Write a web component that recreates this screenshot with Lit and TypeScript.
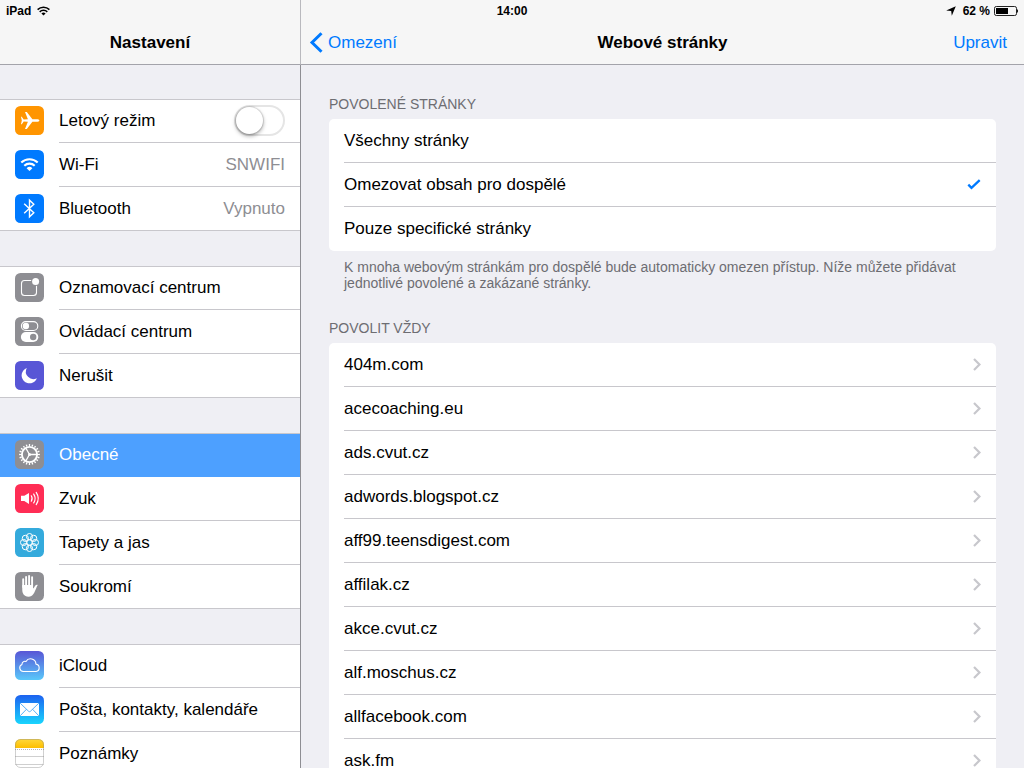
import { LitElement, html, css, svg, nothing } from "lit";
import type { TemplateResult, SVGTemplateResult } from "lit";
import { customElement, property, state } from "lit/decorators.js";
import { classMap } from "lit/directives/class-map.js";

type IconName =
  | "airplane" | "wifi" | "bluetooth" | "notifications" | "control" | "moon"
  | "gear" | "sound" | "wallpaper" | "privacy" | "icloud" | "mail" | "notes";

interface MenuItem {
  icon: IconName;
  label: string;
  value?: string;
  toggle?: boolean;
  selected?: boolean;
}

const MENU: MenuItem[][] = [
  [
    { icon: "airplane", label: "Letový režim", toggle: true },
    { icon: "wifi", label: "Wi-Fi", value: "SNWIFI" },
    { icon: "bluetooth", label: "Bluetooth", value: "Vypnuto" },
  ],
  [
    { icon: "notifications", label: "Oznamovací centrum" },
    { icon: "control", label: "Ovládací centrum" },
    { icon: "moon", label: "Nerušit" },
  ],
  [
    { icon: "gear", label: "Obecné", selected: true },
    { icon: "sound", label: "Zvuk" },
    { icon: "wallpaper", label: "Tapety a jas" },
    { icon: "privacy", label: "Soukromí" },
  ],
  [
    { icon: "icloud", label: "iCloud" },
    { icon: "mail", label: "Pošta, kontakty, kalendáře" },
    { icon: "notes", label: "Poznámky" },
  ],
];

const MODES = ["Všechny stránky", "Omezovat obsah pro dospělé", "Pouze specifické stránky"];

const SITES = [
  "404m.com", "acecoaching.eu", "ads.cvut.cz", "adwords.blogspot.cz",
  "aff99.teensdigest.com", "affilak.cz", "akce.cvut.cz", "alf.moschus.cz",
  "allfacebook.com", "ask.fm",
];

const ring = (count: number, radius: number) =>
  Array.from({ length: count }, (_, i) => {
    const a = (i * 2 * Math.PI) / count;
    return [14.5 + radius * Math.cos(a), 14.5 + radius * Math.sin(a)];
  });

const GLYPHS: Record<IconName, SVGTemplateResult> = {
  airplane: svg`
    <rect width="29" height="29" rx="5.500" fill="#ff9500"/>
    <path fill="#fff" d="M24.400 14.500c0-.8-1.300-1.300-2.800-1.300h-4.200L11.800 6H10l2.900 7.200-4.200.2-1.900-2.700H6l.8 3.800L6 18.300h.8l1.900-2.700 4.200.2L10 23h1.800l5.600-7.200h4.200c1.500 0 2.800-.5 2.800-1.300z"/>`,
  wifi: svg`
    <rect width="29" height="29" rx="5.500" fill="#007aff"/>
    <g fill="none" stroke="#fff" stroke-width="2.100">
      <path d="M6.300 12.600a11.800 11.800 0 0 1 16.400 0"/>
      <path d="M9.300 15.700a7.500 7.500 0 0 1 10.400 0"/>
    </g>
    <path fill="#fff" d="M14.500 21.100l-2.900-2.900a4.100 4.100 0 0 1 5.800 0z"/>`,
  bluetooth: svg`
    <rect width="29" height="29" rx="5.500" fill="#007aff"/>
    <path fill="none" stroke="#fff" stroke-width="1.400" d="M9.200 9.800l9.600 9-4.300 4V6.200l4.300 4-9.600 9"/>`,
  notifications: svg`
    <rect width="29" height="29" rx="5.500" fill="#8e8e93"/>
    <rect x="6.500" y="7.500" width="15" height="15" rx="3" fill="none" stroke="#fff" stroke-width="1.100"/>
    <circle cx="20.600" cy="8.500" r="4.600" fill="#8e8e93"/>
    <circle cx="20.600" cy="8.500" r="3.500" fill="#fff"/>`,
  control: svg`
    <rect width="29" height="29" rx="5.500" fill="#8e8e93"/>
    <rect x="6.400" y="4.600" width="16.400" height="8.900" rx="4.450" fill="none" stroke="#fff" stroke-width="1.100"/>
    <circle cx="10.900" cy="9.050" r="3.200" fill="#fff"/>
    <rect x="5.900" y="15.100" width="17.400" height="9.900" rx="4.950" fill="#fff"/>
    <circle cx="18.200" cy="20.050" r="3.200" fill="#8e8e93"/>`,
  moon: svg`
    <rect width="29" height="29" rx="5.500" fill="#5856d6"/>
    <path fill="#fff" d="M11.800 7A7.900 7.900 0 1 0 21.900 17.200 7.500 7.500 0 0 1 11.800 7z"/>`,
  gear: svg`
    <rect width="29" height="29" rx="5.500" fill="#8e8e93"/>
    <g fill="none" stroke="#fff">
      <circle cx="14.500" cy="14.500" r="9.400" stroke-width="2" pathLength="80" stroke-dasharray="1.800 2.200" stroke-dashoffset=".9"/>
      <circle cx="14.500" cy="14.500" r="7.600" stroke-width="1.900"/>
      <path stroke-width="1.300" d="M14.500 14.500h7.500M14.500 14.500l-3.750-6.500M14.500 14.500l-3.750 6.500"/>
    </g>
    <circle cx="14.500" cy="14.500" r="1.500" fill="#fff"/>`,
  sound: svg`
    <rect width="29" height="29" rx="5.500" fill="#ff2d55"/>
    <path fill="#fff" d="M6 11.800h3.300L14 9v11l-4.700-3H6z"/>
    <g fill="none" stroke="#fff" stroke-width="1.200" stroke-linecap="round">
      <path d="M16.300 11.800q1.700 2.700 0 5.400"/>
      <path d="M18.700 10.100q2.900 4.400 0 8.800"/>
      <path d="M21.200 8.400q4.100 6.100 0 12.200"/>
    </g>`,
  wallpaper: svg`
    <rect width="29" height="29" rx="5.500" fill="#34aadc"/>
    <g fill="none" stroke="#fff" stroke-width="1">
      <circle cx="14.500" cy="14.500" r="2.700"/>
      ${ring(8, 5.9).map(([x, y]) => svg`<circle cx=${x} cy=${y} r="3.100"/>`)}
    </g>`,
  privacy: svg`
    <rect width="29" height="29" rx="5.500" fill="#8e8e93"/>
    <g fill="none" stroke="#fff" stroke-width="1.900" stroke-linecap="round">
      <path d="M8.200 15V7.300M11.100 14V4.900M14.100 14V4M17.100 14V5.300"/>
    </g>
    <path fill="#fff" d="M7.250 13h10.800v3.600c1-.7 1.500-2.300 2.300-3.200.7-.8 1.700-.9 2.400-.5-.9 1.300-1.400 3.200-2.300 5.200-1.200 2.700-2.400 6.600-6.900 6.600-4.700 0-6.300-3.600-6.300-7.200z"/>`,
  icloud: svg`
    <defs><linearGradient id="sky" x2="0" y2="1"><stop stop-color="#5856d6"/><stop offset="1" stop-color="#5ac8fa"/></linearGradient></defs>
    <rect width="29" height="29" rx="5.500" fill="url(#sky)"/>
    <path fill="none" stroke="#fff" stroke-width="1.100" stroke-linejoin="round" d="M8.300 20.500A3.700 3.700 0 0 1 7 13.400a2.900 2.900 0 0 1 4-2.900 5.300 5.300 0 0 1 9.900 2.600 3.750 3.750 0 0 1 .2 7.400z"/>`,
  mail: svg`
    <defs><linearGradient id="post" x2="0" y2="1"><stop stop-color="#1d62f0"/><stop offset="1" stop-color="#19d5fd"/></linearGradient></defs>
    <rect width="29" height="29" rx="5.500" fill="url(#post)"/>
    <rect x="5" y="8" width="19" height="13" rx=".6" fill="#fff"/>
    <path fill="none" stroke="#2f9cf5" stroke-width=".8" d="M5.200 8.200l8.300 8q1 1 2 0l8.300-8M5.200 20.800l6.200-6.500M23.800 20.800l-6.200-6.500"/>`,
  notes: svg`
    <defs>
      <linearGradient id="pad" x2="0" y2="1"><stop stop-color="#ffd83a"/><stop offset="1" stop-color="#fdbe00"/></linearGradient>
      <clipPath id="sheet"><rect width="29" height="29" rx="5.500"/></clipPath>
    </defs>
    <g clip-path="url(#sheet)">
      <rect width="29" height="29" fill="#fff"/>
      <rect width="29" height="9" fill="url(#pad)"/>
      <path stroke="#b5b5b5" stroke-dasharray="1 1" d="M0 10.500h29"/>
      <path stroke="#cfcfcf" d="M0 17.500h29M0 25.500h29"/>
    </g>
    <rect x=".5" y=".5" width="28" height="28" rx="5" fill="none" stroke="#8a8a8a" stroke-opacity=".4"/>`,
};

@customElement("menu-icon")
class MenuIcon extends LitElement {
  @property() name: IconName = "gear";

  static styles = css`
    :host { display: block; flex: none; }
    .glyph { display: block; width: 29px; height: 29px; }
  `;

  render() {
    return html`<svg class="glyph" viewBox="0 0 29 29" aria-hidden="true">${GLYPHS[this.name]}</svg>`;
  }
}

@customElement("app-root")
class AppRoot extends LitElement {
  @state() private airplane = false;
  @state() private mode = 1;

  static styles = css`
    :host {
      display: grid;
      grid-template-columns: 301px minmax(0, 1fr);
      grid-template-rows: 20px minmax(0, 1fr);
      height: 100vh;
      overflow: hidden;
      background: #efeff4;
      color: #000;
      font-family: "Liberation Sans", Arial, sans-serif;
      font-size: 17px;
      line-height: 20px;
    }
    * { box-sizing: border-box; }
    a { color: inherit; text-decoration: none; }

    .status {
      grid-area: 1 / 1 / 2 / -1;
      z-index: 1;
      display: grid;
      grid-template-columns: 1fr auto 1fr;
      align-items: center;
      padding: 2px 6px 0;
      font-size: 12px;
      line-height: 18px;
      font-weight: 700;
    }
    .device, .power { display: flex; align-items: center; gap: 6px; }
    .power { justify-content: flex-end; gap: 4px; }
    .signal, .arrow, .battery { display: block; }
    .arrow { margin-right: 3px; }

    .sidebar, .detail {
      grid-row: 1 / -1;
      display: flex;
      flex-direction: column;
      min-height: 0;
    }
    .sidebar { grid-column: 1; }
    .detail { grid-column: 2; }

    .bar {
      flex: none;
      display: grid;
      grid-template-columns: 1fr auto 1fr;
      align-items: center;
      height: 65px;
      padding: 21px 8px 0;
      background: #f6f6f6;
      border-bottom: 1px solid #a3a3aa;
    }
    .sidebar .bar { border-right: 1px solid #b9b9be; }
    .title {
      grid-column: 2;
      margin: 0;
      font-size: 17px;
      font-weight: 700;
    }
    .action {
      padding: 0;
      border: 0;
      background: none;
      color: #007aff;
      font: inherit;
      cursor: pointer;
    }
    .back { justify-self: start; display: flex; align-items: center; gap: 5px; }
    .edit { justify-self: end; padding-right: 9px; }

    .menu {
      flex: 1;
      min-height: 0;
      overflow: hidden;
      display: flex;
      flex-direction: column;
      gap: 35px;
      padding-top: 34px;
      border-right: 1px solid #8e8e93;
    }
    .group { flex: none; margin: 0; padding: 0; list-style: none; background: #fff; }
    .item { display: flex; align-items: stretch; height: 44px; padding-left: 15px; }
    .item:first-child { box-shadow: inset 0 1px #c8c7cc; }
    .item:last-child { box-shadow: inset 0 -1px #c8c7cc; }
    .item.selected { background: #4da0ff; color: #fff; }
    .entry {
      flex: 1;
      display: flex;
      gap: 15px;
      padding-top: 7px;
    }
    .text {
      flex: 1;
      display: flex;
      justify-content: space-between;
      align-items: center;
      height: 37px;
      padding: 0 15px 7px 0;
      border-bottom: 1px solid #c8c7cc;
    }
    .item:last-child .text, .item.selected .text { border-bottom-color: transparent; }
    .value { color: #8e8e93; }

    .switch {
      appearance: none;
      flex: none;
      width: 51px;
      height: 31px;
      margin: 0;
      padding: 0;
      border: 2px solid #e5e5e5;
      border-radius: 16px;
      background: #fff;
    }
    .switch::before {
      content: "";
      display: block;
      width: 27px;
      height: 27px;
      border-radius: 50%;
      background: #fff;
      box-shadow: 0 0 1px 1px rgba(0, 0, 0, 0.12), 0 2px 4px rgba(0, 0, 0, 0.35);
    }
    .switch:checked { background: #4cd964; border-color: #4cd964; }
    .switch:checked::before { margin-left: 20px; }

    .content { flex: 1; min-height: 0; overflow: hidden; padding: 31px 28px 0; }
    .heading {
      margin: 0 0 7px;
      color: #6d6d72;
      font-size: 14px;
      line-height: 16px;
      font-weight: 400;
      text-transform: uppercase;
    }
    .card {
      margin: 0;
      padding: 0 0 0 15px;
      border: 0;
      border-radius: 5px;
      background: #fff;
      list-style: none;
    }
    .line {
      display: flex;
      justify-content: space-between;
      align-items: center;
      height: 44px;
      padding-right: 15px;
      border-bottom: 1px solid #c8c7cc;
    }
    .card > :last-child .line, .card > .line:last-child { border-bottom-color: transparent; }
    .radio { appearance: none; width: 0; height: 0; margin: 0; }
    .name { flex: 1; }
    .note {
      margin: 8px 0 29px;
      padding: 0 15px;
      color: #6d6d72;
      font-size: 14px;
      line-height: 16px;
    }
  `;

  private renderItem(item: MenuItem): TemplateResult {
    const text = html`
      <menu-icon name=${item.icon}></menu-icon>
      <span class="text">
        <span>${item.label}</span>
        ${item.value ? html`<span class="value">${item.value}</span>` : nothing}
        ${item.toggle
          ? html`<input class="switch" type="checkbox" .checked=${this.airplane}
              @change=${(e: Event) => (this.airplane = (e.target as HTMLInputElement).checked)}>`
          : nothing}
      </span>`;
    return html`<li class=${classMap({ item: true, selected: !!item.selected })}>
      ${item.toggle
        ? html`<label class="entry">${text}</label>`
        : html`<a class="entry" href="#" aria-current=${item.selected ? "page" : nothing}>${text}</a>`}
    </li>`;
  }

  render() {
    return html`
      <div class="status">
        <span class="device">iPad
          <svg class="signal" width="13" height="10" viewBox="0 0 13 10" aria-hidden="true">
            <g fill="none" stroke="#000" stroke-width="1.500">
              <path d="M.6 3.600a8.500 8.500 0 0 1 11.800 0"/>
              <path d="M2.700 5.900a5.400 5.400 0 0 1 7.600 0"/>
            </g>
            <path d="M6.500 9.500L4.400 7.500a3 3 0 0 1 4.200 0z"/>
          </svg>
        </span>
        <span>14:00</span>
        <span class="power">
          <svg class="arrow" width="10" height="10" viewBox="0 0 10 10" aria-hidden="true"><path d="M9.800.2L5.800 9.800 5.200 5 .2 4.500z"/></svg>
          <span>62 %</span>
          <svg class="battery" width="24" height="10" viewBox="0 0 24 10" aria-hidden="true">
            <rect x=".5" y=".5" width="22" height="9" rx="1.800" fill="none" stroke="#222"/>
            <rect x="2" y="2" width="12" height="6"/>
            <path d="M23 3q2 2 0 4z"/>
          </svg>
        </span>
      </div>

      <nav class="sidebar">
        <header class="bar"><h1 class="title">Nastavení</h1></header>
        <div class="menu">
          ${MENU.map((group) => html`<ul class="group">${group.map((item) => this.renderItem(item))}</ul>`)}
        </div>
      </nav>

      <main class="detail">
        <header class="bar">
          <button class="action back">
            <svg width="14" height="21" viewBox="0 0 14 21" aria-hidden="true"><path fill="none" stroke="#007aff" stroke-width="3" d="M12.500 1.200L3 10.500l9.500 9.300"/></svg>
            Omezení
          </button>
          <h2 class="title">Webové stránky</h2>
          <button class="action edit">Upravit</button>
        </header>
        <div class="content">
          <h3 class="heading" id="modes">Povolené stránky</h3>
          <div class="card" role="radiogroup" aria-labelledby="modes">
            ${MODES.map((label, i) => html`
              <label class="line">
                <input class="radio" type="radio" name="mode" .checked=${this.mode === i} @change=${() => (this.mode = i)}>
                <span class="name">${label}</span>
                ${this.mode === i
                  ? html`<svg width="14" height="11" viewBox="0 0 14 11" aria-hidden="true"><path fill="none" stroke="#007aff" stroke-width="2.300" d="M1.300 5.600l3.200 3.300L12.700 1.200"/></svg>`
                  : nothing}
              </label>`)}
          </div>
          <p class="note">K mnoha webovým stránkám pro dospělé bude automaticky omezen přístup. Níže můžete přidávat jednotlivé povolené a zakázané stránky.</p>
          <h3 class="heading">Povolit vždy</h3>
          <ul class="card">
            ${SITES.map((site) => html`
              <li><a class="line" href="#">${site}
                <svg width="8" height="13" viewBox="0 0 8 13" aria-hidden="true"><path fill="none" stroke="#c7c7cc" stroke-width="2.200" d="M1 1l5.500 5.500L1 12"/></svg>
              </a></li>`)}
          </ul>
        </div>
      </main>
    `;
  }
}
